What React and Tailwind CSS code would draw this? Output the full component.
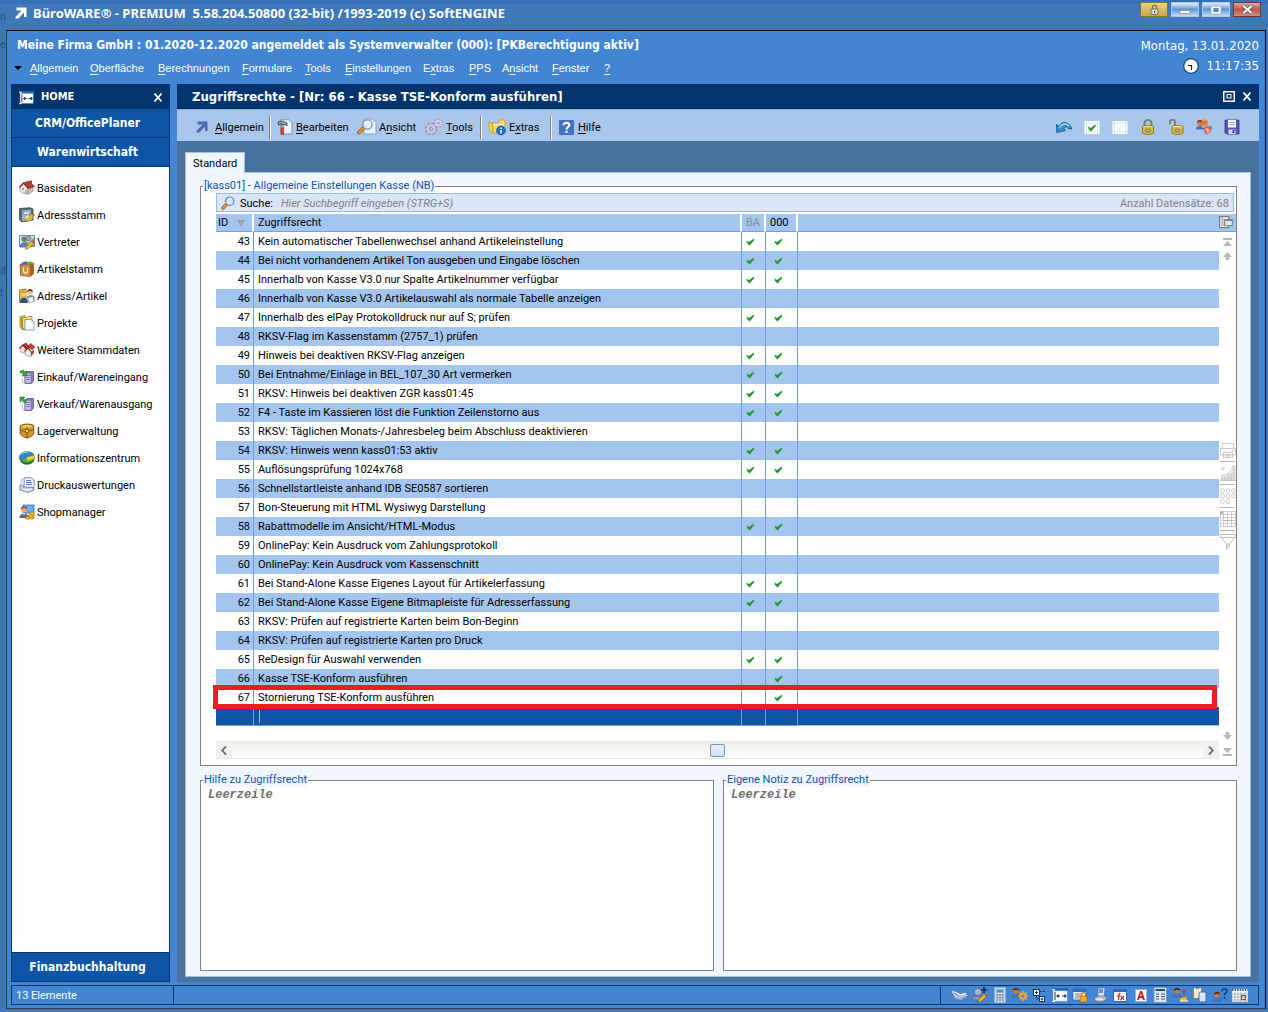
import React from "react";

const rows = [
  [43, "Kein automatischer Tabellenwechsel anhand Artikeleinstellung", 1, 1],
  [44, "Bei nicht vorhandenem Artikel Ton ausgeben und Eingabe löschen", 1, 1],
  [45, "Innerhalb von Kasse V3.0 nur Spalte Artikelnummer verfügbar", 1, 1],
  [46, "Innerhalb von Kasse V3.0 Artikelauswahl als normale Tabelle anzeigen", 0, 0],
  [47, "Innerhalb des elPay Protokolldruck nur auf S; prüfen", 1, 1],
  [48, "RKSV-Flag im Kassenstamm (2757_1) prüfen", 0, 0],
  [49, "Hinweis bei deaktiven RKSV-Flag anzeigen", 1, 1],
  [50, "Bei Entnahme/Einlage in BEL_107_30 Art vermerken", 1, 1],
  [51, "RKSV: Hinweis bei deaktiven ZGR kass01:45", 1, 1],
  [52, "F4 - Taste im Kassieren löst die Funktion Zeilenstorno aus", 1, 1],
  [53, "RKSV: Täglichen Monats-/Jahresbeleg beim Abschluss deaktivieren", 0, 0],
  [54, "RKSV: Hinweis wenn kass01:53 aktiv", 1, 1],
  [55, "Auflösungsprüfung 1024x768", 1, 1],
  [56, "Schnellstartleiste anhand IDB SE0587 sortieren", 0, 0],
  [57, "Bon-Steuerung mit HTML Wysiwyg Darstellung", 0, 0],
  [58, "Rabattmodelle im Ansicht/HTML-Modus", 1, 1],
  [59, "OnlinePay: Kein Ausdruck vom Zahlungsprotokoll", 0, 0],
  [60, "OnlinePay: Kein Ausdruck vom Kassenschnitt", 0, 0],
  [61, "Bei Stand-Alone Kasse Eigenes Layout für Artikelerfassung", 1, 1],
  [62, "Bei Stand-Alone Kasse Eigene Bitmapleiste für Adresserfassung", 1, 1],
  [63, "RKSV: Prüfen auf registrierte Karten beim Bon-Beginn", 0, 0],
  [64, "RKSV: Prüfen auf registrierte Karten pro Druck", 0, 0],
  [65, "ReDesign für Auswahl verwenden", 1, 1],
  [66, "Kasse TSE-Konform ausführen", 0, 1],
  [67, "Stornierung TSE-Konform ausführen", 0, 1],
];

const Svg = ({ children, w = 16, h = 16, box = "0 0 16 16" }) => (
  <svg width={w} height={h} viewBox={box} className="block shrink-0" fill="none" aria-hidden="true">
    {children}
  </svg>
);

/* ---- shared glyphs ---- */
const Arrow = ({ color }) => (
  <Svg w={12} h={12} box="0 0 12 12">
    <path d="M1.5 .5H11.5V10H9V5.5L3.5 11.5H.5V10L6.5 3.5H1.5Z" fill={color} />
  </Svg>
);
const Check = () => (
  <svg width="9" height="8" viewBox="0 0 9 8" className="mx-auto block" role="img" aria-label="aktiv">
    <path d="M0.5 2.5L3 4L8 0.5L8 2.5L3.5 7.5L1 5Z" fill="#219a2b" />
  </svg>
);
const Cross = () => (
  <Svg w={8} h={9} box="0 0 8 9">
    <path d="M0.5 0.5L7.5 8.5M7.5 0.5L0.5 8.5" stroke="#fff" strokeWidth="1.7" />
  </Svg>
);
const Person = ({ x = 0, y = 0, hair = "#3a2418", shirt = "#3d7fe0" }) => (
  <g transform={`translate(${x} ${y})`}>
    <path d="M0 9C0 5 8 5 8 9Z" fill={shirt} stroke="#234e9c" strokeWidth=".5" />
    <circle cx="4" cy="3" r="2.8" fill="#d9773a" />
    <path d="M1 3C0.5 -1 7.5 -1 7 3C5 1 3 1 1 3Z" fill={hair} />
  </g>
);
const Pencil = ({ x = 0, y = 0 }) => (
  <g transform={`translate(${x} ${y})`}>
    <path d="M7 0L9 2L3 8L0 9L1 6Z" fill="#f5c02c" stroke="#8a5f12" strokeWidth=".6" />
    <path d="M7 0L9 2L8 3L6 1Z" fill="#d33" />
  </g>
);

/* ---- sidebar icons ---- */
const House = () => (
  <Svg>
    <path d="M1 7L5 3L9 8V14L3 13L1 11Z" fill="#f3efe9" stroke="#8c8279" strokeWidth=".7" />
    <path d="M9 8L14 6V11L9 14.5Z" fill="#cfc4b6" stroke="#84786c" strokeWidth=".6" />
    <path d="M4.5 3L10 1L15.5 6.5L10 8.5Z" fill="#b8412f" stroke="#6f2018" strokeWidth=".6" />
    <path d="M0.5 7.5L4.5 3L9.5 8.5" stroke="#7d2a1f" strokeWidth="1.3" />
    <path d="M11 .5H13V3.5L11 2.5Z" fill="#a33a2c" />
    <path d="M3 8H5V10H3ZM6 10H7.5V13.5L6 13Z" fill="#8f979f" />
  </Svg>
);
const Binder = () => (
  <Svg>
    <path d="M.5 1.5L11 .7L14 2V13L3 15L.5 13Z" fill="#55697b" stroke="#2f3c49" strokeWidth=".7" />
    <path d="M3 3.5L12 2.5V13L3 14Z" fill="#9db3c4" />
    <path d="M4.5 5L10.5 4.5V7L4.5 7.5Z" fill="#e9f1f7" stroke="#5c7082" strokeWidth=".5" />
    <path d="M6 10L10 8L14 11L9 15Z" fill="#fff" stroke="#999" strokeWidth=".4" />
    <Pencil x={6.5} y={6} />
  </Svg>
);
const Rep = () => (
  <Svg>
    <rect x=".5" y="1.5" width="15" height="11" fill="#cfe0f4" stroke="#6e8fb5" />
    <path d="M2 10L6 6L10 9L15 3V12H2Z" fill="#7db466" />
    <circle cx="5" cy="5" r="2.6" fill="#777" />
    <circle cx="9.5" cy="4.5" r="2.4" fill="#a8a8a8" stroke="#555" strokeWidth=".6" />
    <path d="M1 13C1 8 9 8 9 13Z" fill="#5d87c8" stroke="#2d4b7d" strokeWidth=".6" />
    <Pencil x={6.5} y={6.5} />
  </Svg>
);
const Article = () => (
  <Svg>
    <path d="M1 3.5L11 3L14.5 2V13L11 15.5L1.5 14.5Z" fill="#d58a3a" stroke="#8a4e16" strokeWidth=".7" />
    <path d="M11 3.5L14.5 2V13L11 15.5Z" fill="#a75f1f" />
    <path d="M2 2.5L5 .5L8 2V4L2 4.2Z" fill="#3c78d8" />
    <path d="M7 1.5L12 .5L14.3 2.2L8 4Z" fill="#4db04a" />
    <path d="M5 1L8 .3V3H6Z" fill="#cc3a2a" />
    <path d="M4.5 6.5V10C4.5 12.7 8.5 12.7 8.5 10V6.5" stroke="#fff3dc" strokeWidth="1.2" />
  </Svg>
);
const AddressArticle = () => (
  <Svg>
    <path d="M.5 2L7 1V12L.5 13Z" fill="#e5b548" stroke="#80601c" strokeWidth=".7" />
    <circle cx="5" cy="5.5" r="2.6" fill="#f0c9a0" />
    <path d="M2.4 5C2 2 8 2 7.6 5Z" fill="#d9a520" />
    <path d="M.5 15C.5 8 9 8 9 15Z" fill="#35506f" />
    <circle cx="11" cy="4" r="2.7" fill="#e7b68d" />
    <path d="M8.3 4C8 0 14 0 13.7 4L11 2.5Z" fill="#57381d" />
    <path d="M8 9C8 6.5 15.5 6.5 15.5 9V14H9Z" fill="#7c8b9c" />
    <path d="M9 9.5L14 8.8L15 14L10 14.8Z" fill="#f2f5f8" stroke="#788" strokeWidth=".5" />
  </Svg>
);
const Projects = () => (
  <Svg>
    <path d="M1 1.5L6 .7V13L1 12Z" fill="#f2cc3e" stroke="#97791c" strokeWidth=".7" />
    <path d="M3 2.5H8L9 1.5H13V14H3Z" fill="#f6dd74" stroke="#97791c" strokeWidth=".7" />
    <path d="M6 4.5H12L15 7V15H6Z" fill="#f7f9fc" stroke="#7e8ca0" strokeWidth=".8" />
    <path d="M12 4.5V7H15Z" fill="#c5d0de" />
    <path d="M3 3V14L6 15" stroke="#8a6a10" />
  </Svg>
);
const Houses = () => (
  <Svg>
    <path d="M1 6L4 3L7 7V11.5L2 10.5Z" fill="#eee7df" stroke="#8c8279" strokeWidth=".6" />
    <path d="M3.5 3L7 1L11 6L7.5 7.5Z" fill="#b03a2a" stroke="#5e1b14" strokeWidth=".6" />
    <path d="M9 4L12 1.5L15.7 5L13 8Z" fill="#c14737" stroke="#5e1b14" strokeWidth=".6" />
    <path d="M.3 6.5L4 3L7.5 7.5" stroke="#7d2a1f" strokeWidth="1.2" />
    <path d="M6 9L9 6L12 10V14.5L6.5 13.5Z" fill="#f3efe9" stroke="#8c8279" strokeWidth=".6" />
    <path d="M12 10L15 7.5V11L12 14.5Z" fill="#9d5a4c" />
    <path d="M5.5 9.5L9 6L12.5 10.5" stroke="#8f2e22" strokeWidth="1.2" />
  </Svg>
);
const Server = ({ out }) => (
  <Svg>
    <path d="M6 4L8 2.5H14.5V12L12.5 14.5H6Z" fill="#8a86bd" stroke="#4b4780" strokeWidth=".7" />
    <path d="M6 4.2H12.3V14.2H6Z" fill="#c3c0e4" stroke="#5c588f" strokeWidth=".6" />
    <path d="M7 6.5H11.5M7 8.5H11.5M7 10.5H11.5" stroke="#6f6ba3" strokeWidth=".8" />
    <path d="M3.5 14H6M3.5 9V14" stroke="#aaa" strokeWidth=".7" />
    {out ? (
      <path d="M1 1H6L4.5 2.5L7.5 5.5L5.5 7L2.5 4L1 6Z" fill="#35a832" stroke="#176b18" strokeWidth=".5" />
    ) : (
      <path d="M1 2.5C3 .5 5 1 6 3L7.5 2V7H2.8L4.3 5.5C3.5 3.8 2.5 3.5 1 4Z" fill="#35a832" stroke="#176b18" strokeWidth=".5" />
    )}
  </Svg>
);
const Barrel = () => (
  <Svg>
    <path d="M1 3C4 .5 12 .5 14.8 2.5V11C12 14 9 15 8 15C5 14.5 3 13 1.2 11Z" fill="#d39a28" stroke="#6a4608" strokeWidth=".8" />
    <path d="M2 3.5C5 1.5 11 1.5 13.5 3C11 5 5 5 2 3.5Z" fill="#f1cd62" />
    <path d="M8 4V15M1 7C5 9 11 8.5 14.8 6.5" stroke="#5e3d06" strokeWidth=".8" />
    <rect x="6.5" y="6.5" width="3" height="3" fill="#f5de84" stroke="#5e3d06" strokeWidth=".6" />
  </Svg>
);
const Info = () => (
  <Svg>
    <ellipse cx="8" cy="9" rx="7.4" ry="5.8" fill="#3e5f24" />
    <ellipse cx="8" cy="7.3" rx="7.5" ry="5.6" fill="#58b13c" stroke="#2d6d27" strokeWidth=".6" />
    <path d="M8 7.3L15 5C14 2.5 11 1.6 8 1.6C4 1.6 1 3.5 .5 7L2 11L8 7.3Z" fill="#2e83c9" />
    <path d="M8 7.3L15.2 5.5V8.5L8 11Z" fill="#f0cf3f" />
    <path d="M2 5C4 2.5 7 2 9 2.5" stroke="#a6d6f5" />
  </Svg>
);
const PrintDocs = () => (
  <Svg>
    <path d="M5 .7H12L15 3V11H5Z" fill="#eaf2fc" stroke="#5d7ba5" strokeWidth=".8" />
    <path d="M7 3.5H12M7 5.5H13M7 7.5H13" stroke="#4776bd" strokeWidth=".9" />
    <path d="M.8 8L4 6.5V10L13 10.5L15 11.5V13L9 15.5L1 13Z" fill="#c9ced6" stroke="#686f7a" strokeWidth=".7" />
    <path d="M2 2H5V8L2 8.5Z" fill="#dfe5ee" stroke="#97a3b5" strokeWidth=".5" />
    <path d="M3 12L8 13.5L13 12" stroke="#fff" />
  </Svg>
);
const Shop = () => (
  <Svg>
    <path d="M4 1H15V9H4Z" fill="#62aeea" stroke="#2b659c" strokeWidth=".7" />
    <circle cx="5" cy="5.5" r="3" fill="#e9a877" />
    <path d="M1.8 5.5C1.5 1 8.5 1 8.2 5.5L5 3.5Z" fill="#ad3c1e" />
    <path d="M.5 14C.5 8 10 8 10 14Z" fill="#5e646e" />
    <path d="M4 9.5L5 12L6 9.5Z" fill="#fff" />
    <g fill="#f1b82f" stroke="#936010" strokeWidth=".5">
      <ellipse cx="12.5" cy="13.5" rx="3" ry="1.6" />
      <ellipse cx="12.5" cy="11.5" rx="3" ry="1.6" />
      <ellipse cx="12.8" cy="9.5" rx="2.8" ry="1.5" />
      <ellipse cx="8.5" cy="14" rx="2.2" ry="1.4" />
    </g>
  </Svg>
);

/* ---- toolbar icons ---- */
const HammerDoc = () => (
  <Svg>
    <path d="M4 .8H12L15 3.5V15H4Z" fill="#f0f5fd" stroke="#6b87b5" strokeWidth=".9" />
    <path d="M12 .8V3.5H15Z" fill="#b4c8e6" />
    <path d="M1 3C3 1.5 7 2 10 4V7L8.5 5.5H6.5V6H4V4.8L1.5 6Z" fill="#9ba3aa" stroke="#353b40" strokeWidth=".8" />
    <path d="M4.2 6H6.6V9H4.2Z" fill="#b9bec2" stroke="#555" strokeWidth=".5" />
    <path d="M4 9H6.8V15.5H4Z" fill="#df4a22" stroke="#84230c" strokeWidth=".5" />
  </Svg>
);
const LensDoc = () => (
  <Svg w={20} h={18} box="0 0 20 18">
    <path d="M7 1H16L19 4V16H7Z" fill="#eaf2fd" stroke="#7f9cc8" strokeWidth=".9" />
    <path d="M16 1V4H19Z" fill="#abc2e4" />
    <path d="M6.5 10L2 14.5" stroke="#8c4a10" strokeWidth="3.6" strokeLinecap="round" />
    <path d="M6.5 10L2 14.5" stroke="#f09a36" strokeWidth="2.2" strokeLinecap="round" />
    <circle cx="10.5" cy="6.5" r="4.6" fill="#d9efff" stroke="#8a94a0" strokeWidth="1.3" />
    <path d="M8 6C8.5 4 10 3.5 12 4" stroke="#fff" strokeWidth="1.4" />
  </Svg>
);
const Gears = () => (
  <Svg w={20} h={18} box="0 0 20 18">
    <circle cx="7" cy="11" r="5" stroke="#8f89ac" strokeWidth="2.6" strokeDasharray="2.4 1.53" />
    <circle cx="7" cy="11" r="3.3" stroke="#c9c4dc" strokeWidth="3.4" />
    <circle cx="7" cy="11" r="1.6" fill="#a9c6eb" stroke="#8a84ab" strokeWidth=".7" />
    <circle cx="14.5" cy="5" r="3.4" stroke="#9c96b8" strokeWidth="2.2" strokeDasharray="2 1.05" />
    <circle cx="14.5" cy="5" r="2.2" stroke="#d0cce2" strokeWidth="2.6" />
    <circle cx="14.5" cy="5" r="1" fill="#8983ab" />
  </Svg>
);
const FolderInfo = () => (
  <Svg w={18} h={17} box="0 0 18 17">
    <path d="M.5 3.5L4 4L5.5 14.5L2 13Z" fill="#f7d84f" stroke="#c39a22" strokeWidth=".7" />
    <path d="M4 4H10L11.5 1H17V12L5.5 14.5Z" fill="#f8dc62" stroke="#c39a22" strokeWidth=".8" />
    <path d="M5 5.5H16" stroke="#fff4b5" />
    <circle cx="13" cy="11.5" r="4.4" fill="#1a6fd1" stroke="#0e4896" strokeWidth=".7" />
    <path d="M13 8.6V10M13 11V14.2" stroke="#fff" strokeWidth="1.6" />
  </Svg>
);
const Help = () => (
  <Svg w={15} h={15} box="0 0 15 15">
    <rect width="15" height="15" rx="1" fill="#4571c4" />
    <path d="M4.7 5.3C4.7 2 10.3 2 10.3 5C10.3 7 7.6 7 7.6 9.5" stroke="#fff" strokeWidth="2.1" />
    <rect x="6.5" y="10.8" width="2.2" height="2" fill="#fff" />
  </Svg>
);
const Undo = () => (
  <Svg>
    <path d="M.5 5.5L3 7.5C6 1.5 14 2.5 15.7 10L12 9.5C10.5 7 9 7.5 8 9.5L9.5 11.5L.8 13.5Z" fill="#2f93d4" stroke="#0f4775" strokeWidth=".8" />
    <path d="M3.5 8.5C6 4.5 10 3.8 13.5 7" stroke="#9fdcf7" strokeWidth="1.4" />
  </Svg>
);
const Tick = ({ on }) => (
  <Svg>
    <rect x=".5" y="2" width="15" height="13" fill="#fff" />
    <path d="M2.5 2V15M13.5 2V15M.5 4H15.5M.5 13H15.5" stroke="#cfdff5" strokeWidth=".8" />
    <path d="M4 7.5L7 9L11.5 5V7.5L7 12.5L4.5 10Z" fill={on ? "#2a9a31" : "#f0f2f5"} />
  </Svg>
);
const Lock = ({ open }) => (
  <Svg>
    {open ? (
      <path d="M2 5C1 -.5 7 -.5 7 3V8" stroke="#7c7c62" strokeWidth="1.9" />
    ) : (
      <path d="M4.5 8V4C4.5 0 11.5 0 11.5 4V8" stroke="#75806f" strokeWidth="1.9" />
    )}
    <g transform={open ? "translate(1.5 0)" : "translate(0 0)"}>
      <path d="M2.5 7.5C5 6 11 6 13.5 7.5V14C11 15.8 5 15.8 2.5 14Z" fill="#e0bc35" stroke="#7e6413" strokeWidth=".8" />
      <path d="M3.3 8C6 7 10 7 12.7 8" stroke="#fbeb9a" />
      <ellipse cx="8" cy="11.5" rx="3" ry="1.6" fill="#97a9b3" stroke="#6d6226" strokeWidth=".6" />
    </g>
  </Svg>
);
const People = () => (
  <Svg>
    <Person x={0} y={1} hair="#a02015" />
    <Person x={5} y={0} hair="#f0ae21" shirt="#e8c13b" />
    <path d="M8 9L12 7L16 8L14.5 13L11 15.8L8 13Z" fill="#e54595" />
    <path d="M9 10L12 9L14 12L11.5 14.5Z" fill="#f3d62c" />
    <path d="M13 8L16 6.5L15 10Z" fill="#35b548" />
  </Svg>
);
const Disk = () => (
  <Svg>
    <path d="M1 1H15V15H2.5L1 13.5Z" fill="#5457b3" stroke="#2f3286" strokeWidth=".8" />
    <rect x="4" y="1" width="8" height="7.5" fill="#f7f8fd" />
    <path d="M5 3.5H11M5 5.5H11" stroke="#9ea3cf" />
    <rect x="4.5" y="10.5" width="7" height="4.5" fill="#d5d8ea" />
    <rect x="8.5" y="11" width="2" height="3" fill="#3c3f8e" />
  </Svg>
);
const Lens = () => (
  <Svg w={14} h={14} box="0 0 14 14">
    <path d="M5 9L2 12" stroke="#8c4a10" strokeWidth="3.2" strokeLinecap="round" />
    <path d="M5 9L2 12" stroke="#f09a36" strokeWidth="1.8" strokeLinecap="round" />
    <circle cx="8.7" cy="5.2" r="4.2" fill="#cde9ff" stroke="#6288b3" strokeWidth="1.2" />
    <path d="M6.5 5C7 3 9 2.5 10.5 3.4" stroke="#fff" strokeWidth="1.2" />
  </Svg>
);

/* ---- status bar icons ---- */
const FieldIcon = ({ w = 16 }) => (
  <Svg w={w} h={w}>
    <rect x="0" y="1" width="16" height="3" fill="#2a62b8" />
    <rect x="2" y="4" width="13" height="10" fill="#fff" stroke="#c9d6e8" strokeWidth=".6" />
    <path d="M1.5 2V15M0 14.5H3M0 2.5H3" stroke="#e7eef8" />
    <path d="M3 5V13" stroke="#223" strokeWidth=".9" />
    <path d="M5 9H8M10 9H14M6.5 7.5L5 9L6.5 10.5M12.5 7.5L14 9L12.5 10.5" stroke="#16366f" strokeWidth="1.1" />
  </Svg>
);
const statusIcons = [
  <Svg><path d="M0 5L7 9L14 7L16 8.5L9 13L3 11.5Z" fill="#c3cbe0" stroke="#7783a8" strokeWidth=".7" /><path d="M0 5C4 4 5 7 8 8L14 6.5" stroke="#edf1fa" strokeWidth="1.4" /><path d="M4 10L8 11.5L13 9" stroke="#8590b3" strokeWidth=".8" /></Svg>,
  <Svg><circle cx="6" cy="5" r="3.6" fill="#aeb7c6" stroke="#5c6677" strokeWidth=".8" /><path d="M0 13C0 8 10 8 10 13Z" fill="#8c9ab5" stroke="#4f5d79" strokeWidth=".7" /><path d="M12 0V6M9 3H15" stroke="#122a55" strokeWidth="1.7" /><Pencil x={6} y={6.5} /></Svg>,
  <Svg><rect x="2.5" y=".5" width="11" height="15" fill="#c8d6ea" stroke="#a3b3cc" /><rect x="4.5" y="2.5" width="7" height="3" fill="#4f8be0" /><path d="M4.5 8H11.5M4.5 10.5H11.5M4.5 13H11.5" stroke="#5f759c" strokeWidth="1.4" strokeDasharray="1.6 1.1" /></Svg>,
  <Svg><Person x={0} y={1} hair="#3a1a0e" /><circle cx="11" cy="9" r="2.6" stroke="#f3b03a" strokeWidth="2" /><path d="M11 4V7M11 11V14M6 9H9M13 9H16M7.5 5.5L9.5 7.5M12.5 10.5L14.5 12.5M14.5 5.5L12.5 7.5M9.5 10.5L7.5 12.5" stroke="#f3a81e" strokeWidth="1.5" /></Svg>,
  <Svg><rect x="1.5" y="2.5" width="6" height="6" fill="#fff" stroke="#123366" /><rect x="7.5" y="9.5" width="5" height="5" fill="#fff" stroke="#123366" /><path d="M4.5 4V7M3 5.5H6M10 10.5V13.5M8.5 12H11.5" stroke="#123366" /><path d="M8 4.5H14M4.5 9V12H7" stroke="#123366" strokeDasharray="2 1" /></Svg>,
  <FieldIcon />,
  <Svg><rect x="1" y="2" width="13" height="11" fill="#eff4fb" stroke="#3468ae" strokeWidth=".8" /><rect x="1" y="2" width="13" height="3" fill="#2e6cc4" /><path d="M3 7H9M3 9H8M3 11H7" stroke="#6d7f9a" /><path d="M9.5 9V7.5C9.5 5 13.5 5 13.5 7.5V9" stroke="#b38213" strokeWidth="1.3" /><rect x="8" y="9" width="7" height="6" fill="#f4ab22" stroke="#8f5d0b" strokeWidth=".6" /></Svg>,
  <Svg><path d="M6 1H13L12 10H6Z" fill="#dbe8fb" stroke="#5e7bb0" strokeWidth=".8" /><path d="M7 3H11M7 5H11" stroke="#3f72cf" strokeWidth="1.3" /><path d="M2 11L6 9H13L15 12L10 15L3 14Z" fill="#b8bfca" stroke="#676f7d" strokeWidth=".7" /><path d="M4 12L11 12.5" stroke="#fff" /></Svg>,
  <Svg><rect x="1.5" y="2.5" width="13" height="12" fill="#fff" stroke="#2a62b0" /><rect x="1" y="2" width="14" height="3" fill="#2c68c0" /><path d="M8.5 6.5C6.5 6 7 9 6.5 13M5 9H8.5M9 9L12 13M12 9L8.5 13" stroke="#cf2020" strokeWidth="1.2" /></Svg>,
  <Svg><rect x="3.5" y="2.5" width="11" height="12" fill="#f6f8fc" stroke="#9fb3d4" /><path d="M1.5 1V15M0 2L1.5 .5L3 2M0 14L1.5 15.5L3 14" stroke="#22a2ea" /><path d="M5 13L8.2 4H10L13 13H11L10.4 11H7.4L6.8 13ZM7.9 9.3H9.9L9 6Z" fill="#c01919" /></Svg>,
  <Svg><rect x="2" y=".5" width="12.5" height="15" fill="#dbe4ef" stroke="#8198b3" /><rect x="3.5" y="2" width="9.5" height="2" fill="#284b74" /><path d="M4 7H7M9 7H13M4 9.5H7M9 9.5H13M4 12H7M9 12H13" stroke="#46658a" strokeWidth="1.1" /></Svg>,
  <Svg><Person x={1} y={1} hair="#2d130c" /><path d="M12 3V8M10.5 4.5L12 3L13.5 4.5" stroke="#e3241b" strokeWidth="1.2" /><path d="M7 11L14 9.5L16 13L9 14.5Z" fill="#f2bd30" stroke="#8a650d" strokeWidth=".6" /><path d="M8 14H16" stroke="#fff" strokeWidth="1.2" /></Svg>,
  <Svg><rect x="1.5" y="1.5" width="8" height="10" rx="1" fill="#f7ecc4" stroke="#a68226" /><path d="M3 1V4M8 1V4" stroke="#fff" strokeWidth="1.4" /><rect x="7" y="5" width="7" height="10" rx="1.5" fill="#cfe2fa" stroke="#386db3" /><path d="M8.5 7.5H12.5" stroke="#fff" strokeWidth="1.5" /></Svg>,
  <Svg><Person x={1} y={5} hair="#51150d" /><path d="M10 4.5C10 1 15 1 15 4C15 6 12.5 6 12.5 8.5M12.5 10V12" stroke="#143a83" strokeWidth="1.6" /></Svg>,
  <Svg><rect x="0" y="2" width="16" height="13" fill="#fff" stroke="#9aa8bd" strokeWidth=".6" /><path d="M0 3H16" stroke="#3a4c66" strokeWidth="2" strokeDasharray="1.3 1.3" /><path d="M0 7H16M0 10H16M0 13H16M3 5V15M6 5V15M9 5V15M13 5V15" stroke="#8fa4c8" strokeWidth=".8" /><rect x="9.5" y="8.5" width="4" height="4" stroke="#d8301c" strokeWidth="1.2" /></Svg>,
];
const statusNames = ["Telefon", "Adresse neu", "Rechner", "Benutzer", "Struktur", "Feldbreite", "Maskenschutz", "Drucker", "Funktion", "Schrift", "Formular", "Vertreter", "Zwischenablage", "Benutzerhilfe", "Kalender"];

const sidebar = [
  ["Basisdaten", <House />],
  ["Adressstamm", <Binder />],
  ["Vertreter", <Rep />],
  ["Artikelstamm", <Article />],
  ["Adress/Artikel", <AddressArticle />],
  ["Projekte", <Projects />],
  ["Weitere Stammdaten", <Houses />],
  ["Einkauf/Wareneingang", <Server />],
  ["Verkauf/Warenausgang", <Server out />],
  ["Lagerverwaltung", <Barrel />],
  ["Informationszentrum", <Info />],
  ["Druckauswertungen", <PrintDocs />],
  ["Shopmanager", <Shop />],
];

/* label text with one underlined access key at index k */
const Key = ({ t, k = 0 }) => (
  <span>
    {t.slice(0, k)}
    <span className="underline underline-offset-2">{t[k]}</span>
    {t.slice(k + 1)}
  </span>
);

const menu = [
  ["Allgemein", 0, "w-[60px]"],
  ["Oberfläche", 0, "w-[68px]"],
  ["Berechnungen", 0, "w-[84px]"],
  ["Formulare", 0, "w-[63px]"],
  ["Tools", 0, "w-[40px]"],
  ["Einstellungen", 0, "w-[78px]"],
  ["Extras", 1, "w-[46px]"],
  ["PPS", 0, "w-[33px]"],
  ["Ansicht", 1, "w-[50px]"],
  ["Fenster", 0, "w-[52px]"],
  ["?", 0, "w-[20px]"],
];

const ToolButton = ({ icon, t, k, className }) => (
  <button type="button" className={"flex items-center text-left leading-4 " + className}>
    {icon}
    <span className="pt-[2px]"><Key t={t} k={k} /></span>
  </button>
);
const Sep = () => <div className="h-[23px] w-[2px] shrink-0 border-l border-[#7d7d7d] bg-[#f4f7fc]" />;

const Frame = ({ title, className = "", children }) => (
  <section className={"relative border border-[#808080] bg-white " + className}>
    <h2 className="absolute -top-2 left-[2px] bg-[#f1f5fd] px-[1px] leading-[14px] text-[#0f55a5]">{title}</h2>
    {children}
  </section>
);

const WinButton = ({ label, className, children }) => (
  <button type="button" aria-label={label} className={"flex h-[15px] w-[28px] items-center justify-center border " + className}>
    {children}
  </button>
);

const StripRule = () => <div className="h-px w-[15px] bg-[#b5b5b5]" />;

export default function App() {
  return (
    <div className="relative flex min-h-screen flex-col bg-[#3e78b8] font-['Roboto',sans-serif] text-[11px] text-black">
      <div aria-hidden="true" className="absolute left-0 top-[10px] text-[10px] leading-[14px] text-[#1c4f8f]">
        <div className="h-7">n</div>
        <div className="h-[227px]">e</div>
        <div className="h-[21px]">if</div>
        <div>t</div>
      </div>

      <header className="flex h-[30px] items-start justify-between border-t-4 border-[#3471b6] pl-[15px] pr-[7px]">
        <div className="flex items-center gap-[6px] pt-[1px] text-white">
          <Arrow color="#fff" />
          <h1 className="whitespace-pre font-['Noto_Sans',sans-serif] text-[13px] font-bold leading-4">
            {"BüroWARE® - PREMIUM  5.58.204.50800 (32-bit) /1993-2019 (c) SoftENGINE"}
          </h1>
        </div>
        <div className="-mt-[2px] flex gap-[3px]">
          <WinButton label="Sperren" className="border-[#8c7432] bg-gradient-to-b from-[#e9d27c] to-[#c8a945]">
            <Svg w={9} h={11} box="0 0 9 11">
              <path d="M2.5 5V3C2.5 .5 6.5 .5 6.5 3V5" stroke="#6b6656" strokeWidth="1.2" />
              <rect x="1" y="5" width="7" height="5.5" fill="#d8d4c8" stroke="#6b6656" strokeWidth=".8" />
              <path d="M4.5 7V9" stroke="#555" />
            </Svg>
          </WinButton>
          <WinButton label="Minimieren" className="border-[#a9c8ec] bg-gradient-to-b from-[#e8f1fb] via-[#5b97d8] to-[#c5dcf5]">
            <Svg w={12} h={11} box="0 0 12 11"><rect x="1" y="6.5" width="10" height="3" fill="#fff" stroke="#888" strokeWidth=".7" /></Svg>
          </WinButton>
          <WinButton label="Maximieren" className="border-[#a9c8ec] bg-gradient-to-b from-[#e8f1fb] via-[#5b97d8] to-[#c5dcf5]">
            <Svg w={12} h={10} box="0 0 12 10"><rect x="1" y="1" width="10" height="8" fill="#fff" stroke="#8899ad" strokeWidth=".6" /><rect x="4" y="3.7" width="4" height="2.6" fill="#5b97d8" stroke="#3a6fae" /></Svg>
          </WinButton>
          <WinButton label="Schließen" className="border-[#7a3328] bg-gradient-to-b from-[#dda79f] via-[#bb5849] to-[#cf8b80]">
            <Svg w={11} h={9} box="0 0 11 9"><path d="M1.5 1L9.5 8M9.5 1L1.5 8" stroke="#555" strokeWidth="3.6" /><path d="M1.5 1L9.5 8M9.5 1L1.5 8" stroke="#fff" strokeWidth="2.2" /></Svg>
          </WinButton>
        </div>
      </header>

      <div className="mb-[3px] ml-[6px] mr-[2px] flex flex-1 flex-col border border-black border-l-[#3b3b3b] border-b-[#3b3b3b] bg-[#4185d3] pb-[3px] pl-[4px] pr-[6px]">
        <div className="flex h-[53px] justify-between text-white">
          <div>
            <p className="pl-[6px] pt-[6px] font-['DejaVu_Sans_Condensed','DejaVu_Sans',sans-serif] text-[12px] font-bold leading-4">
              Meine Firma GmbH : 01.2020-12.2020 angemeldet als Systemverwalter (000): [PKBerechtigung aktiv]
            </p>
            <nav className="mt-[7px] flex items-center pl-[3px] font-['Liberation_Sans',sans-serif] text-[11px] leading-4">
              <span className="mr-[8px] h-0 w-0 border-x-4 border-t-4 border-x-transparent border-t-black" />
              {menu.map(([t, k, w]) => (
                <button type="button" key={t} className={"whitespace-nowrap text-left " + w}>
                  <Key t={t} k={k} />
                </button>
              ))}
            </nav>
          </div>
          <div className="pt-[5px] text-right font-['DejaVu_Sans_Condensed','DejaVu_Sans',sans-serif] text-[13px] leading-5">
            <p>Montag, 13.01.2020</p>
            <p className="flex items-center justify-end gap-[7px]">
              <Svg>
                <circle cx="8" cy="8" r="7.3" fill="#fff" stroke="#143e74" strokeWidth="1.2" />
                <path d="M5 7.5H8.5V12" stroke="#222" strokeWidth="1.2" />
              </Svg>
              11:17:35
            </p>
          </div>
        </div>

        <div className="flex flex-1 gap-[7px]">
          <aside className="flex w-[159px] shrink-0 flex-col border border-[#03346d] bg-[#fcfdff]">
            <div className="flex h-[24px] items-center gap-[7px] bg-[#03346d] px-[7px] font-['DejaVu_Sans_Condensed','DejaVu_Sans',sans-serif] text-[11px] font-bold text-white">
              <FieldIcon w={15} />
              <span className="flex-1">HOME</span>
              <button type="button" aria-label="HOME schließen"><Cross /></button>
            </div>
            <button type="button" className="h-[29px] border-b border-[#03346d] bg-[#0e56a5] pr-[6px] font-['DejaVu_Sans_Condensed','DejaVu_Sans',sans-serif] text-[12px] font-bold text-white">CRM/OfficePlaner</button>
            <button type="button" className="h-[29px] border-b border-[#03346d] bg-[#0e56a5] pr-[6px] font-['DejaVu_Sans_Condensed','DejaVu_Sans',sans-serif] text-[12px] font-bold text-white">Warenwirtschaft</button>
            <ul className="flex-1 pl-[7px] pt-[7px]">
              {sidebar.map(([t, icon]) => (
                <li key={t}>
                  <a href="#" className="flex h-[27px] items-center gap-[2px] leading-4">
                    {icon}
                    <span className="pt-[2px]">{t}</span>
                  </a>
                </li>
              ))}
            </ul>
            <button type="button" className="h-[29px] border-t border-[#03346d] bg-[#0e56a5] pr-[6px] font-['DejaVu_Sans_Condensed','DejaVu_Sans',sans-serif] text-[12px] font-bold text-white">Finanzbuchhaltung</button>
          </aside>

          <main className="flex min-w-0 flex-1 flex-col bg-[#47719e]">
            <div className="flex h-[25px] items-center justify-between bg-[#03346d] pl-[15px] pr-[8px] text-white">
              <h2 className="font-['DejaVu_Sans_Condensed','DejaVu_Sans',sans-serif] text-[13px] font-bold">Zugriffsrechte - [Nr: 66 - Kasse TSE-Konform ausführen]</h2>
              <div className="flex items-center gap-[8px]">
                <button type="button" aria-label="Fenster wiederherstellen">
                  <Svg w={12} h={11} box="0 0 12 11"><rect x=".75" y=".75" width="10.5" height="9.5" stroke="#fff" strokeWidth="1.5" /><rect x="4" y="3.5" width="4" height="3.5" stroke="#fff" /></Svg>
                </button>
                <button type="button" aria-label="Fenster schließen"><Cross /></button>
              </div>
            </div>
            <div className="flex h-[32px] items-center justify-between border-t border-[#8fb0d8] bg-[#a9c6eb] pl-[19px] pr-[19px] pt-[3px]">
              <div className="flex items-center">
                <ToolButton icon={<Arrow color="#4b69b5" />} t="Allgemein" k={0} className="w-[73px] gap-[7px]" />
                <Sep />
                <ToolButton icon={<HammerDoc />} t="Bearbeiten" k={0} className="ml-[6px] w-[80px] gap-[3px]" />
                <ToolButton icon={<LensDoc />} t="Ansicht" k={1} className="w-[67px] gap-[2px]" />
                <ToolButton icon={<Gears />} t="Tools" k={0} className="w-[56px] gap-[2px]" />
                <Sep />
                <ToolButton icon={<FolderInfo />} t="Extras" k={1} className="ml-[6px] w-[62px] gap-[3px]" />
                <Sep />
                <ToolButton icon={<Help />} t="Hilfe" k={0} className="ml-[7px] gap-[4px]" />
              </div>
              <div className="flex gap-[12px]">
                <button type="button" aria-label="Rückgängig"><Undo /></button>
                <button type="button" aria-label="Alle markieren"><Tick on /></button>
                <button type="button" aria-label="Markierung entfernen"><Tick /></button>
                <button type="button" aria-label="Sperren"><Lock /></button>
                <button type="button" aria-label="Entsperren"><Lock open /></button>
                <button type="button" aria-label="Benutzerrechte"><People /></button>
                <button type="button" aria-label="Speichern"><Disk /></button>
              </div>
            </div>

            <div className="flex flex-1 flex-col px-[8px] pb-[5px] pt-[11px]">
              <div className="relative z-10 -mb-px flex">
                <button type="button" className="h-[21px] border border-b-0 border-[#a9c0dd] bg-[#f1f5fd] px-[7px] pt-[2px] leading-4">Standard</button>
              </div>
              <div className="flex flex-1 flex-col gap-[14px] border border-[#a9c0dd] bg-[#f1f5fd] pb-[5px] pl-[14px] pr-[13px] pt-[13px]">
                <Frame title="[kass01] - Allgemeine Einstellungen Kasse (NB)" className="pb-[6px] pl-[15px] pt-[6px]">
                  <div className="mr-[2px] flex h-[19px] items-center border border-[#9abae6] bg-[#dbe5f6] px-[4px] leading-4">
                    <Lens />
                    <label htmlFor="suche" className="ml-[5px] w-[41px] pt-[2px]">Suche:</label>
                    <input id="suche" type="text" placeholder="Hier Suchbegriff eingeben (STRG+S)" className="min-w-0 flex-1 bg-transparent pt-[2px] italic outline-none placeholder:text-[#808080]" />
                    <span className="pt-[2px] text-[#808080]">Anzahl Datensätze: 68</span>
                  </div>

                  <div className="mt-[2px] flex">
                    <div className="min-w-0 flex-1">
                      <table className="w-full table-fixed border-separate border-spacing-0 leading-4">
                        <colgroup>
                          <col className="w-[38px]" />
                          <col className="w-[488px]" />
                          <col className="w-[24px]" />
                          <col className="w-[32px]" />
                          <col />
                        </colgroup>
                        <thead>
                          <tr className="h-[18px] bg-[#a3c5ef] text-left">
                            <th className="border-b border-r-2 border-[#75a0d8] border-r-white p-0 pl-[2px] pt-px font-normal">
                              <span className="flex items-center gap-[9px]">
                                ID
                                <span className="h-0 w-0 border-x-4 border-t-[7px] border-x-transparent border-t-[#a0a0a0]" />
                              </span>
                            </th>
                            <th className="border-b border-r-2 border-[#75a0d8] border-r-white p-0 pl-[4px] pt-px font-normal">Zugriffsrecht</th>
                            <th className="border-b border-r-2 border-[#75a0d8] border-r-white p-0 pl-[4px] pt-px font-normal text-[#8a8f98]">BA</th>
                            <th className="border-b border-r-2 border-[#75a0d8] border-r-white p-0 pl-[4px] pt-px font-normal">000</th>
                            <td className="border-b border-[#75a0d8] p-0" />
                          </tr>
                        </thead>
                        <tbody>
                          {rows.map(([id, t, ba, u], i) => (
                            <tr key={id} className={i % 2 ? "h-[19px] bg-[#a3c5ef]" : "relative h-[19px] bg-white"}>
                              <td className="border-r border-[#6f9fda] p-0 pr-[3px] pt-px text-right">
                                {id}
                                {id === 67 && (
                                  <span className="pointer-events-none absolute -bottom-[2px] -left-[3px] -top-[3px] right-[2px] z-10 border-[5px] border-[#ee1c24]" />
                                )}
                              </td>
                              <td className="whitespace-nowrap border-r border-[#6f9fda] p-0 pl-[4px] pt-px">{t}</td>
                              <td className="border-r border-[#6f9fda] p-0 pr-[7px] pt-px">{ba ? <Check /> : null}</td>
                              <td className="border-r border-[#6f9fda] p-0 pr-[7px] pt-px">{u ? <Check /> : null}</td>
                              <td className="p-0" />
                            </tr>
                          ))}
                          <tr className="h-[19px] bg-[#0e56a5]">
                            <td className="border-b border-r border-[#6f9fda] p-0" />
                            <td className="border-b border-r border-[#6f9fda] p-0 pl-[5px]"><span className="block h-[13px] w-px bg-[#e0b070]" /></td>
                            <td className="border-b border-r border-[#6f9fda] p-0" />
                            <td className="border-b border-r border-[#6f9fda] p-0" />
                            <td className="border-b border-[#a3c5ef] p-0" />
                          </tr>
                        </tbody>
                      </table>
                      <div className="mt-[15px] flex h-[18px] items-center border-y border-[#e9e6de] bg-gradient-to-b from-[#f0ede8] to-white">
                        <button type="button" aria-label="Nach links" className="flex h-full w-[16px] items-center justify-center bg-[#f0f0f0]">
                          <Svg w={6} h={9} box="0 0 6 9"><path d="M5 .5L1.2 4.5L5 8.5" stroke="#666" strokeWidth="1.8" /></Svg>
                        </button>
                        <div className="flex flex-1 justify-center">
                          <div className="h-[13px] w-[15px] rounded-[2px] border border-[#6e93cf] bg-gradient-to-b from-[#f0f0ee] to-[#cfe0f6]" />
                        </div>
                        <button type="button" aria-label="Nach rechts" className="flex h-full w-[16px] items-center justify-center bg-[#f0f0f0]">
                          <Svg w={6} h={9} box="0 0 6 9"><path d="M1 .5L4.8 4.5L1 8.5" stroke="#666" strokeWidth="1.8" /></Svg>
                        </button>
                      </div>
                    </div>

                    <div className="flex w-[17px] flex-col items-center justify-between">
                      <div className="flex w-full flex-col items-center gap-[6px]">
                        <div className="flex h-[18px] w-full items-center border-b border-[#75a0d8] bg-[#a3c5ef]">
                          <Svg w={14} h={13} box="0 0 14 13">
                            <rect x=".6" y=".6" width="9" height="11" fill="#f4f4f2" stroke="#7b7b78" strokeWidth="1.2" />
                            <path d="M2.5 3H4.5M2.5 5H4.5M2.5 7H4.5M2.5 9H4.5" stroke="#777" />
                            <rect x="5.6" y="4.1" width="7.8" height="5.5" fill="#e9e9e2" stroke="#8a8a86" strokeWidth="1.2" />
                            <path d="M5 4H14" stroke="#777" strokeWidth="1.4" />
                          </Svg>
                        </div>
                        <Svg w={9} h={8} box="0 0 9 8"><path d="M0 0H9V2H0ZM4.5 3L9 8H0Z" fill="#b5b5b5" /></Svg>
                        <Svg w={9} h={8} box="0 0 9 8"><path d="M4.5 0L9 5H6.2V8H2.8V5H0Z" fill="#b5b5b5" /></Svg>
                      </div>
                      <div className="flex flex-col items-center gap-[3px]">
                        <Svg>
                          <path d="M2.5 6V1.5H13.5V6M.5 6.5H15.5V13H.5ZM3.5 10.5H12.5V15.5H3.5ZM5 12.5H11M5 14H11" stroke="#c9c9c9" />
                          <rect x="12" y="8" width="2" height="1" fill="#bbb" />
                        </Svg>
                        <StripRule />
                        <Svg>
                          <path d="M1 12H3V15H1ZM4 12H6V15H4ZM7 10H9V15H7ZM10 8H12V15H10ZM13 4H15V15H13Z" fill="#dcdcdc" stroke="#c4c4c4" strokeWidth=".7" />
                          <path d="M1 11C7 10 11 7 13.5 1.5M11.5 2.5L14 .5L15.5 3.5M0 15.5H16" stroke="#c4c4c4" />
                          <path d="M1.5 2H5L4 5.5H1.5Z" fill="#d8d8d8" />
                        </Svg>
                        <StripRule />
                        <Svg>
                          <g stroke="#cbcbcb">
                            <circle cx="2.5" cy="2.5" r="1.9" /><circle cx="8" cy="2.5" r="1.9" /><circle cx="13.5" cy="2.5" r="1.9" />
                            <circle cx="2.5" cy="8" r="1.9" /><circle cx="8" cy="8" r="1.9" /><circle cx="13.5" cy="8" r="1.9" />
                            <circle cx="2.5" cy="13.5" r="1.9" /><circle cx="8" cy="13.5" r="1.9" />
                          </g>
                        </Svg>
                        <StripRule />
                        <Svg>
                          <path d="M.5 .5H15.5V15.5H.5ZM.5 3.5H15.5M.5 6.5H15.5M.5 9.5H15.5M.5 12.5H15.5M3.5 .5V15.5M7.5 .5V15.5M11.5 .5V15.5" stroke="#cbcbcb" />
                          <path d="M0 0H3V3H0ZM4 9H12V10H4Z" fill="#b5b5b5" />
                        </Svg>
                        <StripRule />
                        <Svg>
                          <path d="M.5 .5H15.5V3.5H.5ZM1.5 4L6.5 10V15.5L9.5 13V10L14.5 4" stroke="#c2c2c2" />
                          <path d="M8 9V14" stroke="#dcdcdc" strokeWidth="2" />
                        </Svg>
                      </div>
                      <div className="flex flex-col items-center gap-[8px] pb-[3px]">
                        <Svg w={9} h={8} box="0 0 9 8"><path d="M4.5 8L9 3H6.2V0H2.8V3H0Z" fill="#b5b5b5" /></Svg>
                        <Svg w={9} h={8} box="0 0 9 8"><path d="M0 6H9V8H0ZM4.5 5L9 0H0Z" fill="#b5b5b5" /></Svg>
                      </div>
                    </div>
                  </div>
                </Frame>

                <div className="grid flex-1 grid-cols-2 gap-[9px]">
                  {["Hilfe zu Zugriffsrecht", "Eigene Notiz zu Zugriffsrecht"].map((t) => (
                    <Frame key={t} title={t} className="pl-[7px] pt-[7px]">
                      <p className="font-['Liberation_Mono',monospace] text-[12px] font-bold italic leading-[14px] text-[#707070]">Leerzeile</p>
                    </Frame>
                  ))}
                </div>
              </div>
            </div>
          </main>
        </div>

        <footer className="mt-[3px] flex h-[20px] items-stretch border border-[#03346d] text-white">
          <div className="flex w-[162px] items-center border-r border-[#03346d] pl-[4px] pt-[2px] leading-4">13 Elemente</div>
          <div className="flex-1" />
          <div className="flex items-center gap-[4px] border-l border-[#03346d] pl-[11px] pr-[10px]">
            {statusIcons.map((icon, i) => (
              <button type="button" key={i} aria-label={statusNames[i]}>{icon}</button>
            ))}
          </div>
        </footer>
      </div>
    </div>
  );
}
